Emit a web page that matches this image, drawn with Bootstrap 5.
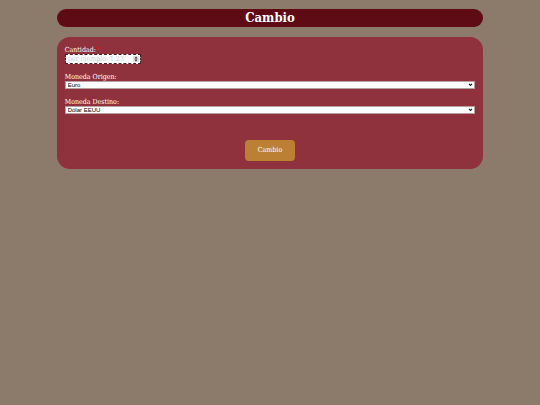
<!DOCTYPE html>
<html lang="es">
<head>
<meta charset="utf-8">
<meta name="viewport" content="width=device-width, initial-scale=1">
<title>Cambio</title>
<link href="https://cdn.jsdelivr.net/npm/bootstrap@5.3.0/dist/css/bootstrap.min.css" rel="stylesheet">
<style>
body { background: #8c7b6b; font-family: "Roboto Slab", "DejaVu Serif Condensed", "DejaVu Serif", serif; }
.page { width: 79%; padding-top: 9px; }
.title-bar { background: #5e0b15; border-radius: 9px; font-size: 13px; line-height: 18px; margin-bottom: 10px; }
.panel { background: #90323d; border-radius: 13px; padding: 8px; }
.field-group { margin-bottom: 8px; }
.field-label { font-size: 7px; line-height: 8px; padding-top: 1px; }
.req { color: #f00; }
.amount { width: 76px; height: 10px; padding: 0 2px; font-family: inherit; font-size: 7px; line-height: 8px; background: #fff; border: 1px dashed #4e2028; border-radius: 0; outline: none; color: #222; appearance: textfield; }
.amount::placeholder { color: #add8e6; opacity: 1; }
.amount::-webkit-inner-spin-button { appearance: none; }
.choice { height: 8px; padding: 0 2px; border: 1px solid #b5a0a2; border-radius: 0; appearance: none; background: #fff; color: #000; font: 6px/6px "Liberation Sans", Arial, sans-serif; }
.glyph { right: 2px; top: 2px; pointer-events: none; }
.submit-row { margin-top: 26px; }
.submit-btn, .submit-btn:hover { background: #bc8034; color: #fff; border: 0; border-radius: 4px; padding: 6px 13px; font-size: 7px; line-height: 9px; }
</style>
<script src="https://cdn.jsdelivr.net/npm/bootstrap@5.3.0/dist/js/bootstrap.bundle.min.js"></script>
</head>
<body>
<main class="page mx-auto">
  <h1 class="title-bar text-center text-white fw-bold">Cambio</h1>
  <form class="panel text-white">
    <div class="field-group d-flex flex-column align-items-start">
      <label class="field-label" for="cantidad">Cantidad:<span class="req">*</span></label>
      <div class="position-relative d-flex">
        <input class="amount" type="number" id="cantidad" step="0.01" placeholder="por ejemplo: 1.23">
        <svg class="glyph position-absolute" width="6" height="6" viewBox="0 0 6 6" aria-hidden="true"><path fill="#e3e3e3" d="M0 0h6v6H0z"/><path fill="#333" d="M1.4 2.4 3 .4l1.6 2zM1.4 3.6 3 5.6l1.6-2z"/></svg>
      </div>
    </div>
    <div class="field-group d-flex flex-column">
      <label class="field-label" for="origen">Moneda Origen:</label>
      <div class="position-relative d-flex">
        <select class="choice w-100" id="origen"><option>Euro</option><option>Dólar EEUU</option></select>
        <svg class="glyph position-absolute" width="5" height="4" viewBox="0 0 5 4" aria-hidden="true"><path fill="none" stroke="#111" stroke-width="1.1" d="m1 .8 1.5 1.7L4 .8"/></svg>
      </div>
    </div>
    <div class="field-group d-flex flex-column">
      <label class="field-label" for="destino">Moneda Destino:</label>
      <div class="position-relative d-flex">
        <select class="choice w-100" id="destino"><option>Dólar EEUU</option><option>Euro</option></select>
        <svg class="glyph position-absolute" width="5" height="4" viewBox="0 0 5 4" aria-hidden="true"><path fill="none" stroke="#111" stroke-width="1.1" d="m1 .8 1.5 1.7L4 .8"/></svg>
      </div>
    </div>
    <div class="submit-row d-flex justify-content-center">
      <button class="btn submit-btn" type="submit">Cambio</button>
    </div>
  </form>
</main>
</body>
</html>
